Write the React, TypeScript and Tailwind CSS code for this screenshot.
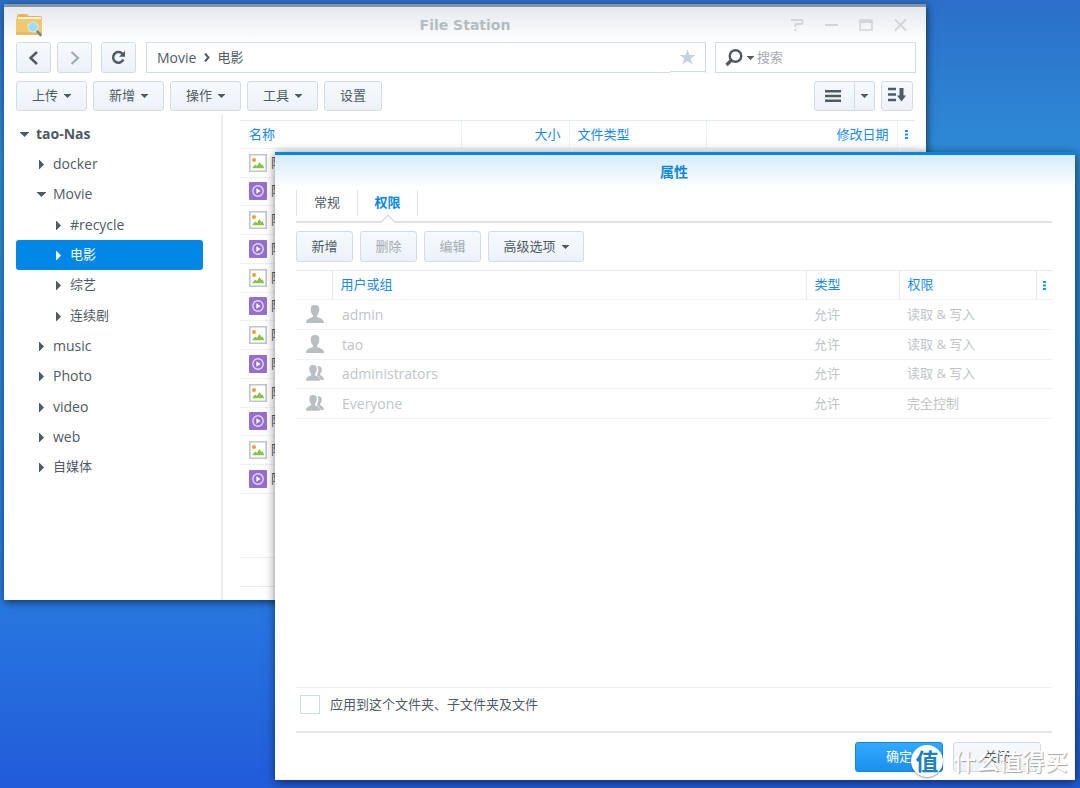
import { useState } from "react";
import type { ReactNode } from "react";

const tree = [
  { name: "tao-Nas", level: 0, open: true },
  { name: "docker", level: 1 },
  { name: "Movie", level: 1, open: true },
  { name: "#recycle", level: 2 },
  { name: "电影", level: 2 },
  { name: "综艺", level: 2 },
  { name: "连续剧", level: 2 },
  { name: "music", level: 1 },
  { name: "Photo", level: 1 },
  { name: "video", level: 1 },
  { name: "web", level: 1 },
  { name: "自媒体", level: 1 },
];

const indents = ["pl-1", "pl-[21px]", "pl-[38px]"];

const files = Array.from({ length: 12 }, (_, i) => ({ id: i, name: "阿", video: i % 2 === 1 }));

const permissions = [
  { name: "admin", group: false, access: "读取 & 写入" },
  { name: "tao", group: false, access: "读取 & 写入" },
  { name: "administrators", group: true, access: "读取 & 写入" },
  { name: "Everyone", group: true, access: "完全控制" },
];

const buttonBase =
  "flex items-center justify-center rounded-[3px] border border-[#d2dce6] bg-linear-to-b from-[#f6fafe] to-[#ecf2f8]";

function Caret() {
  return (
    <svg className="h-1 w-[7px] shrink-0 fill-[#505a64]" viewBox="0 0 7 4">
      <path d="M0 0h7v.6L3.500 4 0 .6z" />
    </svg>
  );
}

function TreeArrow({ open }: { open?: boolean }) {
  return (
    <svg className="h-[9px] w-[9px] shrink-0 fill-current" viewBox="0 0 9 9">
      <path d={open ? "M0 2h9v.5L4.500 7 0 2.500z" : "M2 0h.6L7 4.500 2.600 9H2z"} />
    </svg>
  );
}

function ToolButton({ children, caret, disabled, className }: {
  children: ReactNode;
  caret?: boolean;
  disabled?: boolean;
  className: string;
}) {
  return (
    <button disabled={disabled} className={`${buttonBase} gap-1.5 text-[#505a64] disabled:text-[#a4abb3] ${className}`}>
      {children}
      {caret && <Caret />}
    </button>
  );
}

function FolderIcon() {
  return (
    <svg className="h-[24px] w-[27px]" viewBox="0 0 27 24">
      <path d="M1 3q0-2 2-2h8l2 2h11q2 0 2 2v5H1z" fill="#e5b758" />
      <path d="M2 4h23v4H2z" fill="#fbf3dc" />
      <path d="M0 6h26v15q0 1-1 1H1q-1 0-1-1z" fill="#f0c870" />
      <path d="M0 19h26v2q0 1-1 1H1q-1 0-1-1z" fill="#e6bc60" />
      <path d="M20.500 17.500L24.500 22" stroke="#7d858d" strokeWidth="2.600" strokeLinecap="round" />
      <circle cx="17" cy="14" r="5" fill="#9fdcfa" stroke="#d9e6ea" strokeWidth="1.200" />
    </svg>
  );
}

function ImageIcon() {
  return (
    <svg className="h-[18px] w-[18px] shrink-0" viewBox="0 0 18 18">
      <path d="M.8.800h16.400v16.400H.8z" fill="#fff" stroke="#bcc6cc" strokeWidth="1.600" />
      <circle cx="5" cy="6" r="2" fill="#f99b2c" />
      <path d="M3 14.200l3-3.700 2 1.500L10.500 8l2 3 1.200-.5 1.600 3.700z" fill="#8bc34a" />
    </svg>
  );
}

function VideoIcon() {
  return (
    <svg className="h-[18px] w-[18px] shrink-0" viewBox="0 0 18 18">
      <rect width="18" height="18" rx="1" fill="#946fcd" />
      <circle cx="9" cy="9" r="5.200" fill="none" stroke="#e3d9f3" strokeWidth="1.400" />
      <path d="M7.400 6.200v5.600L11.500 9z" fill="#fff" />
    </svg>
  );
}

function UserIcon() {
  return (
    <svg className="h-[18px] w-[18px] fill-[#b9bec3]" viewBox="0 0 18 18">
      <path d="M9 0c3 0 4.500 1.600 4.300 4.500-.1 2.600-.9 4.500-2.300 5.800v1.500c.2 1 6.700 1.400 7 5.200.1.700-.3 1-1 1H1c-.7 0-1.100-.3-1-1 .3-3.800 6.800-4.200 7-5.200v-1.500C5.600 9 4.800 7.100 4.700 4.500 4.500 1.600 6 0 9 0z" />
    </svg>
  );
}

function GroupIcon() {
  return (
    <svg className="h-[18px] w-[18px] fill-[#b9bec3]" viewBox="0 0 18 18">
      <path d="M11.500 2.600c2.600-.9 4.500.3 4.300 3.100-.1 1.800-.7 3-1.600 3.900v1.200c.4.900 3.600 1.600 3.800 5.200h-3.200c-.5-2.200-1.800-3.200-3.600-3.900V10c1.400-1.900 1.700-5 .3-7.400z" />
      <path d="M7 1c2.700 0 4 1.500 3.800 4-.1 2.200-.8 3.700-1.900 4.800V11c.2 1 5 1.300 5.300 4.800 0 .5-.3.900-.8.900H.8c-.5 0-.8-.4-.8-.9C.3 12.300 5 12 5.200 11V9.800C4.100 8.700 3.400 7.200 3.300 5 3.100 2.500 4.300 1 7 1z" />
    </svg>
  );
}

function Dots() {
  return (
    <svg className="mx-auto h-[9px] w-[3px] fill-[#1a94ee]" viewBox="0 0 3 9">
      <path d="M0 0h3v2H0zM0 3.500h3v2H0zM0 7h3v2H0z" />
    </svg>
  );
}

function FileStation() {
  const [selected, setSelected] = useState("电影");

  return (
    <section className="absolute top-1 left-1 flex h-[596px] w-[922px] flex-col border-t-[3px] border-[#8a95a2] bg-white shadow-[1px_2px_8px_rgba(0,0,0,0.6)]">
      {/* Title bar */}
      <header className="flex h-[35px] shrink-0 items-center bg-linear-to-b from-[#e4e9ee] to-white pr-[18px] pl-3">
        <div className="w-[124px]">
          <FolderIcon />
        </div>
        <h1 className="flex-1 text-center font-['DejaVu_Sans',sans-serif] text-sm font-bold text-[#b4bcc3]">File Station</h1>
        <div className="flex w-[118px] items-center justify-between">
          <button aria-label="帮助">
            <svg className="h-[14px] w-[14px]" viewBox="0 0 14 14" fill="none" stroke="#d2d5d8" strokeWidth="1.800">
              <path d="M1 2h10.500q1 0 1 1v2q0 1-1 1H6.500q-1 0-1 1v2M5.500 11v2" />
            </svg>
          </button>
          <button aria-label="最小化">
            <svg className="h-[14px] w-[14px]" viewBox="0 0 14 14" stroke="#d2d5d8" strokeWidth="2">
              <path d="M0 7h13" />
            </svg>
          </button>
          <button aria-label="最大化">
            <svg className="h-[14px] w-[14px]" viewBox="0 0 14 14" fill="none" stroke="#d2d5d8" strokeWidth="1.500">
              <path d="M1 2h12v10H1z" />
              <path d="M1 3.500h12" strokeWidth="3" />
            </svg>
          </button>
          <button aria-label="关闭窗口">
            <svg className="h-[14px] w-[14px]" viewBox="0 0 14 14" stroke="#d2d5d8" strokeWidth="1.800">
              <path d="M1 1.500l11 11M12 1.500l-11 11" />
            </svg>
          </button>
        </div>
      </header>

      {/* Navigation */}
      <div className="flex h-[31px] shrink-0 pr-[10px] pl-3">
        <button aria-label="后退" className={`${buttonBase} mr-1.5 w-[35px]`}>
          <svg className="h-[14px] w-[10px]" viewBox="0 0 10 14" fill="none" stroke="#505a64" strokeWidth="2.500">
            <path d="M8 1L1.500 7 8 13" />
          </svg>
        </button>
        <button aria-label="前进" className={`${buttonBase} mr-[9px] w-[35px]`}>
          <svg className="h-[14px] w-[10px]" viewBox="0 0 10 14" fill="none" stroke="#a4abb3" strokeWidth="2.200">
            <path d="M1.500 1L8 7l-6.500 6" />
          </svg>
        </button>
        <button aria-label="刷新" className={`${buttonBase} mr-[10px] w-[35px]`}>
          <svg className="h-[15px] w-[15px]" viewBox="0 0 15 15">
            <path d="M11.500 4A5.300 5.300 0 1 0 12.300 9.500" fill="none" stroke="#505a64" strokeWidth="2.500" />
            <path d="M14 .8v6H8z" fill="#505a64" />
          </svg>
        </button>
        <nav className="mr-[9px] flex flex-1 items-start border border-b-0 border-[#d2dce6] text-[#505a64]">
          <div className="flex h-[30px] flex-1 items-center border-b border-[#d2dce6] pl-[10px]">
            <a href="#movie" className="text-sm">Movie</a>
            <svg className="mr-[7px] ml-2 h-[9px] w-1.5" viewBox="0 0 6 9" fill="none" stroke="#505a64" strokeWidth="2">
              <path d="M1 .5l3.500 4L1 8.500" />
            </svg>
            <a href="#dianying">电影</a>
          </div>
          <button aria-label="收藏" className="flex h-[29px] w-[35px] items-center justify-center border-b border-[#d2dce6]">
            <svg className="h-[17px] w-[17px] fill-[#c6d1dc]" viewBox="0 0 17 17">
              <path d="M8.500.5l2 5.500h6l-4.800 3.600 1.900 6-5.100-3.700-5.100 3.700 1.900-6L.5 6h6z" />
            </svg>
          </button>
        </nav>
        <div className="flex w-[201px] items-center border border-[#d2dce6] pl-[9px]">
          <svg className="mr-1 h-[18px] w-[18px] shrink-0" viewBox="0 0 18 18" fill="none" stroke="#505a64">
            <circle cx="10.500" cy="7" r="5.800" strokeWidth="2.400" />
            <path d="M6.500 11L1.500 16" strokeWidth="3.200" />
          </svg>
          <Caret />
          <input aria-label="搜索" placeholder="搜索" className="ml-[3px] min-w-0 flex-1 outline-none placeholder:text-[#a4abb3]" />
        </div>
      </div>

      {/* Toolbar */}
      <div className="mt-2 flex h-[30px] shrink-0 gap-1.5 pr-[13px] pl-3">
        <ToolButton caret className="w-[71px]">上传</ToolButton>
        <ToolButton caret className="w-[71px]">新增</ToolButton>
        <ToolButton caret className="w-[71px]">操作</ToolButton>
        <ToolButton caret className="w-[71px]">工具</ToolButton>
        <ToolButton className="w-[58px]">设置</ToolButton>
        <div className="ml-auto flex">
          <button aria-label="列表视图" className={`${buttonBase} w-[41px] rounded-r-none pr-1`}>
            <svg className="h-3 w-4" viewBox="0 0 16 12" stroke="#505a64" strokeWidth="2.400">
              <path d="M0 1.200h16M0 6h16M0 10.800h16" />
            </svg>
          </button>
          <button aria-label="视图选项" className={`${buttonBase} w-[20px] rounded-l-none border-l-0`}>
            <Caret />
          </button>
        </div>
        <button aria-label="排序" className={`${buttonBase} w-[32px] pb-1`}>
          <svg className="h-[15px] w-[18px]" viewBox="0 0 18 15" fill="none" stroke="#505a64" strokeWidth="2.400">
            <path d="M0 2h8M0 7.500h8M0 13h8" />
            <path d="M13.500 1v9" strokeWidth="4" />
            <path d="M9 8.500h9L13.500 14.500z" fill="#505a64" stroke="none" />
          </svg>
        </button>
      </div>

      <div className="flex min-h-0 flex-1">
        <ul className="mt-1 w-[219px] shrink-0 border-r-2 border-[#eceef0] pt-1 pr-[18px] pl-3 text-[#505a64] [&>li]:h-[30px] [&>li:nth-child(3n)]:h-[31px]">
          {tree.map((node) => (
            <li key={node.name}>
              <button
                onClick={() => setSelected(node.name)}
                className={`flex h-[30px] w-full items-center gap-[7px] rounded-[3px] ${indents[node.level]} ${
                  node.level === 0 ? "font-bold" : ""
                } ${/^[#\w]/.test(node.name) ? "text-sm" : ""} ${selected === node.name ? "bg-[#0086e5] text-white" : ""}`}
              >
                <TreeArrow open={node.open} />
                {node.name}
              </button>
            </li>
          ))}
        </ul>

        {/* File list */}
        <div className="mt-[9px] mr-[11px] mb-[13px] ml-[17px] flex min-w-0 flex-1 flex-col border-t border-b border-[#e3eaf2]">
          <table className="w-full table-fixed border-collapse text-[#505a64]">
            <thead>
              <tr className="h-[27px] text-[#1a8ae6] [&>th]:border-b [&>th]:border-[#ecf1f6] [&>th]:font-normal">
                <th className="px-[9px] text-left">名称</th>
                <th className="w-[108px] border-x px-2 text-right">大小</th>
                <th className="w-[137px] border-r px-2 text-left">文件类型</th>
                <th className="w-[191px] border-r px-2 text-right">修改日期</th>
                <th className="w-[18px]"><Dots /></th>
              </tr>
            </thead>
            <tbody className="[&>tr]:h-[29px] [&>tr:nth-child(4n+2)]:h-[28px]">
              {files.map((file) => (
                <tr key={file.id} className="border-b border-[#edf1f5]">
                  <td colSpan={5} className="p-0 pl-[9px]">
                    <div className="flex items-center gap-1">
                      {file.video ? <VideoIcon /> : <ImageIcon />}
                      {file.name}
                    </div>
                  </td>
                </tr>
              ))}
            </tbody>
          </table>
          <div className="mt-auto h-[29px] border-t border-[#edf1f5]" />
        </div>
      </div>
    </section>
  );
}

function PropertiesDialog() {
  const [applyAll, setApplyAll] = useState(false);

  return (
    <section
      role="dialog"
      aria-labelledby="props-title"
      className="absolute top-[152px] left-[275px] flex h-[628px] w-[800px] flex-col border-t-[3px] border-[#0086e5] bg-white bg-linear-to-b from-[#d6ebfa] to-white to-[34px] pr-[23px] pl-[21px] shadow-[1px_2px_10px_rgba(0,0,0,0.6)]"
    >
      <h2 id="props-title" className="h-[35px] shrink-0 pt-[7px] text-center text-sm font-bold text-[#0f86e0]">属性</h2>

      {/* Tabs */}
      <div role="tablist" className="flex h-[33px] shrink-0 items-start border-b-2 border-[#e0e3e6] text-[#505a64]">
        <button role="tab" aria-selected="false" className="h-[26px] w-[61px] border-l border-[#dfe6ed]">常规</button>
        <button role="tab" aria-selected="true" className="relative h-[26px] w-[61px] border-x border-[#dfe6ed] font-bold text-[#0086e5]">
          权限
          <svg className="absolute top-[24px] left-[22px] h-[9px] w-4" viewBox="0 0 16 9">
            <path d="M0 9L8 1l8 8z" fill="#fff" />
            <path d="M0 8h1.500L8 1l6.500 7H16" fill="none" stroke="#dcdfe2" strokeWidth="1.500" />
          </svg>
        </button>
      </div>

      <div className="mt-2 flex h-[31px] shrink-0 gap-[7px]">
        <ToolButton className="w-[57px]">新增</ToolButton>
        <ToolButton disabled className="w-[57px]">删除</ToolButton>
        <ToolButton disabled className="w-[57px]">编辑</ToolButton>
        <ToolButton caret className="w-[96px]">高级选项</ToolButton>
      </div>

      <table className="mt-2 w-full table-fixed border-collapse border-t border-[#e3eaf2]">
        <thead>
          <tr className="h-[29px] border-b border-[#ecf1f6] text-left text-[#1a8ae6] [&>th]:border-[#e3eaf2] [&>th]:font-normal">
            <th className="w-9" />
            <th className="border-x pl-2">用户或组</th>
            <th className="w-[93px] border-r pl-2">类型</th>
            <th className="w-[137px] border-r pl-2">权限</th>
            <th className="w-4"><Dots /></th>
          </tr>
        </thead>
        <tbody className="text-[#c0c4c8] [&>tr]:h-[30px] [&>tr:nth-child(3n)]:h-[29px]">
          {permissions.map((row) => (
            <tr key={row.name} className="border-b border-[#eef2f6]">
              <td className="pb-0.5 pl-[10px]">{row.group ? <GroupIcon /> : <UserIcon />}</td>
              <td className="pl-[10px] text-sm">{row.name}</td>
              <td className="pl-2">允许</td>
              <td className="pl-2">{row.access}</td>
              <td />
            </tr>
          ))}
        </tbody>
      </table>

      <div className="mt-auto flex h-[46px] shrink-0 items-start border-t border-b-2 border-t-[#eff0f2] border-b-[#e4e6e8] pt-[7px] pl-1">
        <label className="flex items-center gap-[10px] text-[#505a64]">
          <input
            type="checkbox"
            checked={applyAll}
            onChange={(e) => setApplyAll(e.target.checked)}
            className="h-[19px] w-[20px] appearance-none border border-[#d2dce6] bg-white checked:bg-[#0086e5]"
          />
          应用到这个文件夹、子文件夹及文件
        </label>
      </div>

      {/* Footer */}
      <footer className="flex h-[47px] shrink-0 items-start justify-end gap-[10px] pt-[9px] pr-[11px]">
        <button className="h-[30px] w-[88px] rounded-[3px] border border-[#1488dd] bg-linear-to-b from-[#33a8ff] to-[#1a90ee] text-white">确定</button>
        <ToolButton className="h-[30px] w-[88px]">关闭</ToolButton>
      </footer>
    </section>
  );
}

function Watermark() {
  return (
    <div className="pointer-events-none absolute right-3 bottom-[11px] flex items-center gap-[10px]">
      <span className="flex h-8 w-8 items-center justify-center rounded-full bg-white text-[23px] leading-none font-bold text-[#1c7fc4] shadow-[0_1px_2px_rgba(0,0,0,0.4)]">
        值
      </span>
      <span className="text-[23px] leading-8 font-medium text-white [text-shadow:1px_1px_1px_rgba(0,0,0,0.35)]">什么值得买</span>
    </div>
  );
}

export default function App() {
  return (
    <main className="relative h-screen overflow-hidden bg-[linear-gradient(180deg,#2b6fca_0%,#2e8bd6_20%,#2a82d4_50%,#2777e0_77%,#225bd9_100%)] font-['Open_Sans','Noto_Sans_CJK_SC',sans-serif] text-[13px]">
      <FileStation />
      <PropertiesDialog />
      <Watermark />
    </main>
  );
}
